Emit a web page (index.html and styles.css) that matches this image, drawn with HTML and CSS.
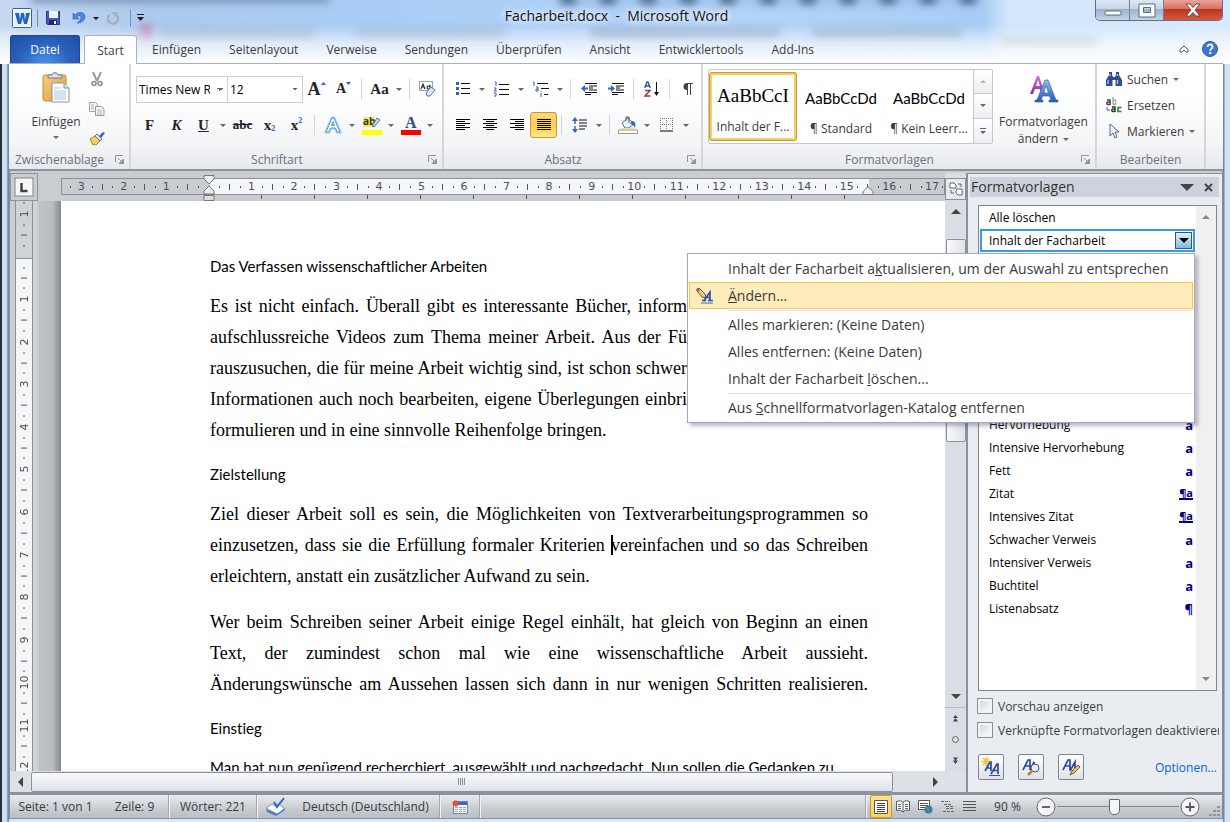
FILE: index.html
```html
<!DOCTYPE html>
<html lang="de">
<head>
<meta charset="utf-8">
<title>Facharbeit.docx - Microsoft Word</title>
<link rel="stylesheet" href="styles.css">
</head>
<body>
<svg class="defs" aria-hidden="true">
  <defs>
    <linearGradient id="gBlue" x1="0" y1="0" x2="0" y2="1"><stop offset="0" stop-color="#8fc0f5"/><stop offset="1" stop-color="#2358b0"/></linearGradient>
    <linearGradient id="gPurple" x1="0" y1="0" x2="0" y2="1"><stop offset="0" stop-color="#d070dc"/><stop offset="1" stop-color="#8d2f9f"/></linearGradient>
    <linearGradient id="gBoard" x1="0" y1="0" x2="1" y2="1"><stop offset="0" stop-color="#f6cf7e"/><stop offset="1" stop-color="#dc9f3a"/></linearGradient>
    <symbol id="launcher" viewBox="0 0 9 9"><path d="M.5 7V.5H8" fill="none" stroke="#8f949b"/><path d="M3 3l3 3M8.500 4v4.500H4z" fill="#8f949b" stroke="#8f949b"/></symbol>
  </defs>
</svg>
<div class="window">
  <header class="titlebar">
    <div class="glass" aria-hidden="true"><i class="g1"></i><i class="g2"></i><i class="g3"></i><i class="g4"></i><i class="g5"></i><i class="g6"></i><i class="g7"></i><i class="g8"></i></div>
    <div class="quick">
      <button class="q" aria-label="Word"><svg width="20" height="20" viewBox="0 0 20 20"><rect x=".5" y=".5" width="19" height="19" rx="1" fill="#fff" stroke="#2c62b2"/><rect x="2" y="2" width="16" height="16" fill="#e8f1fb"/><path d="M3 5h4l1 7 1-7h3l1 7 1-7h4l-3 11h-3l-1.500-6-1.500 6H6z" fill="#2463c0"/></svg></button>
      <span class="qsep"></span>
      <button class="q" aria-label="Speichern"><svg width="16" height="16" viewBox="0 0 16 16"><path d="M1 1h14v14H2.500L1 13.500z" fill="#4a55c4"/><path d="M1.500 1.500h13v13H3L1.500 13z" fill="none" stroke="#2f379b"/><rect x="4" y="1" width="9" height="7" fill="#eef3fc"/><rect x="4" y="10" width="8" height="5" fill="#262b55"/><rect x="9" y="11" width="2" height="3" fill="#fff"/></svg></button>
      <button class="q undo" aria-label="Rückgängig"><svg width="14" height="14" viewBox="0 0 14 14"><path d="M1 2v6h6L5 6c2-2 4-1.500 4 .5 0 2-2 4-4 5.500 5 0 8-3 8-6.500C13 1.500 7-.5 3 4z" fill="#4c86dd" stroke="#2a5cb4" stroke-width=".6"/></svg></button>
      <i class="caret dark"></i>
      <button class="q redo" aria-label="Wiederholen"><svg width="14" height="14" viewBox="0 0 14 14"><path d="M3.500 4A5 5 0 1 0 11 4.500" fill="none" stroke="#a9aeb8" stroke-width="2.600"/><path d="M5 1h6.500v6.500z" fill="#a9aeb8"/></svg></button>
      <span class="qsep"></span>
      <button class="q more" aria-label="Schnellzugriff anpassen"><svg width="8" height="8" viewBox="0 0 8 8"><path d="M0 .5h7" stroke="#222"/><path d="M0 3h7L3.500 7z" fill="#222"/></svg></button>
    </div>
    <h1 class="title">Facharbeit.docx&nbsp; -&nbsp; Microsoft Word</h1>
    <div class="winbtns">
      <button aria-label="Minimieren"><svg width="18" height="12" viewBox="0 0 18 12"><rect x="1" y="7" width="16" height="4" rx="1" fill="#fff" stroke="#5a6a7c"/></svg></button>
      <button aria-label="Maximieren"><svg width="18" height="15" viewBox="0 0 18 15"><path fill-rule="evenodd" d="M1 1h16v13H1zM5.500 4.500h7v5h-7z" fill="#fff" stroke="#5a6a7c"/></svg></button>
      <button class="close" aria-label="Schließen"><svg width="18" height="14" viewBox="0 0 18 14"><path d="M2 1h4l3 3.500L12 1h4l-5 6 5 6h-4L9 9.500 6 13H2l5-6z" fill="#fff" stroke="#6a4a50"/></svg></button>
    </div>
  </header>

  <nav class="tabs">
    <button class="tab file">Datei</button>
    <button class="tab active">Start</button>
    <button class="tab">Einfügen</button>
    <button class="tab">Seitenlayout</button>
    <button class="tab">Verweise</button>
    <button class="tab">Sendungen</button>
    <button class="tab">Überprüfen</button>
    <button class="tab">Ansicht</button>
    <button class="tab">Entwicklertools</button>
    <button class="tab">Add-Ins</button>
    <span class="grow"></span>
    <button class="mini" aria-label="Menüband minimieren"><svg width="10" height="8" viewBox="0 0 10 8"><path d="M1 4.500L5 1l4 3.500V7H7L5 5 3 7H1z" fill="#fff" stroke="#555"/></svg></button>
    <button class="mini help" aria-label="Hilfe"><svg width="16" height="16" viewBox="0 0 16 16"><circle cx="8" cy="8" r="7.500" fill="#3d76cf" stroke="#2a5aa8"/><path d="M5.500 6c0-3.400 5-3.400 5 0 0 1.700-2.300 1.700-2.300 3.700" fill="none" stroke="#fff" stroke-width="1.800"/><rect x="7.200" y="11" width="2" height="2" fill="#fff"/></svg></button>
  </nav>

  <section class="ribbon">
    <div class="group clipboard">
      <div class="body">
        <button class="big"><svg width="28" height="31" viewBox="0 0 28 31"><rect x="1" y="3" width="23" height="26" rx="2" fill="url(#gBoard)" stroke="#c08a3a"/><path d="M6 6V3h4c0-3 6-3 6 0h4v3z" fill="#dfe3e8" stroke="#6d7680"/><path d="M10 11h12l5 5v14H10z" fill="#fff" stroke="#7d93b4"/><path d="M22 11v5h5" fill="#dbe6f5" stroke="#7d93b4"/><path d="M12 16h7M12 19h12M12 21h12M12 23h12M12 25h12M12 27h12" stroke="#b3c3da"/></svg><span>Einfügen</span><i class="caret"></i></button>
        <div class="stack">
          <button aria-label="Ausschneiden"><svg width="12" height="15" viewBox="0 0 12 15"><path d="M2 0l4 9M10 0L6 9" stroke="#9a9a9a" stroke-width="2"/><circle cx="3" cy="11.500" r="2" fill="none" stroke="#8f8f8f" stroke-width="1.600"/><circle cx="9" cy="11.500" r="2" fill="none" stroke="#8f8f8f" stroke-width="1.600"/></svg></button>
          <button aria-label="Kopieren"><svg width="16" height="14" viewBox="0 0 16 14"><path d="M.5.500h6l2 2v7h-8z" fill="#f6f6f6" stroke="#a5a5a5"/><path d="M6.500 4.500h6l2.500 2.500v6.500H6.500z" fill="#f6f6f6" stroke="#999"/><path d="M2 3h3M2 5h3M2 7h3M8 8h5M8 10h5M8 12h5" stroke="#b5b5b5"/></svg></button>
          <button aria-label="Format übertragen"><svg width="16" height="15" viewBox="0 0 16 15"><path d="M1 8l5-3 5 5-4 4-2-1-1 1z" fill="#f0d060" stroke="#a98a28"/><path d="M6 5l2-2 5 5-2 2z" fill="#dfe4ec" stroke="#6a7686"/><path d="M10 5l4-4 2 1-4 5z" fill="#4b58b8"/></svg></button>
        </div>
      </div>
      <footer><span>Zwischenablage</span><button aria-label="Dialog Zwischenablage"><svg width="9" height="9"><use href="#launcher"/></svg></button></footer>
    </div>

    <div class="group font">
      <div class="body rows">
        <div class="row">
          <select class="combo name" aria-label="Schriftart"><option>Times New Roman</option></select><select class="combo size" aria-label="Schriftgrad"><option>12</option></select>
          <button class="tb glyph" aria-label="Schrift vergrößern"><span class="a-lg">A</span><svg width="5" height="16" viewBox="0 0 5 16"><path d="M0 4l2.500-3L5 4z" fill="#2a62b8"/></svg></button>
          <button class="tb glyph" aria-label="Schrift verkleinern"><span class="a-sm">A</span><svg width="5" height="16" viewBox="0 0 5 16"><path d="M0 1h5L2.500 4z" fill="#2a62b8"/></svg></button>
          <i class="sep"></i>
          <button class="tb serif-b" aria-label="Groß-/Kleinschreibung">Aa</button><i class="caret c"></i>
          <i class="sep"></i>
          <button class="tb" aria-label="Formatierung löschen"><svg width="17" height="16" viewBox="0 0 17 16"><rect x=".5" y=".5" width="13" height="9" fill="#fff" stroke="#8fa5c5"/><path d="M2 8l2-5 2 5M3 6h2M11 4v4M11 6a1.500 1.500 0 1 0 0 1" fill="none" stroke="#333" stroke-width="1.200"/><path d="M7 12l5-6 4 3-5 6H8z" fill="#dce5f3" stroke="#5a78a8"/></svg></button>
        </div>
        <div class="row">
          <button class="tb serif-b">F</button><button class="tb serif-b it">K</button><button class="tb serif-b ul">U</button><i class="caret c"></i>
          <button class="tb strike">abc</button><button class="tb xs">x<sub>2</sub></button><button class="tb xs">x<sup>2</sup></button>
          <i class="sep"></i>
          <button class="tb" aria-label="Texteffekte"><svg width="18" height="18" viewBox="0 0 18 18"><path d="M2 16L8 2h2l6 14h-3l-1.500-4h-5L5 16zM7.500 9.500h3L9 5.500z" fill="#fff" stroke="#a6d3f0" stroke-width="3"/><path d="M2 16L8 2h2l6 14h-3l-1.500-4h-5L5 16zM7.500 9.500h3L9 5.500z" fill="#fff" stroke="#4d9bd6"/></svg></button><i class="caret c"></i>
          <button class="tb" aria-label="Texthervorhebungsfarbe"><svg width="20" height="20" viewBox="0 0 20 20"><rect x="1" y="2" width="12" height="10" fill="#f5ee5a"/><text x="1" y="10" font-size="10" font-weight="bold" fill="#333">ab</text><path d="M10 11l5-8 3 2-6 7z" fill="#c9d9f0" stroke="#4c6ea5"/><rect y="15" width="20" height="5" fill="#ff0"/></svg></button><i class="caret c"></i>
          <button class="tb" aria-label="Schriftfarbe"><svg width="20" height="20" viewBox="0 0 20 20"><text x="4" y="13" class="serif" font-size="16" fill="#2b4a83">A</text><rect y="15" width="20" height="5" fill="#f00"/></svg></button><i class="caret c"></i>
        </div>
      </div>
      <footer><span>Schriftart</span><button aria-label="Dialog Schriftart"><svg width="9" height="9"><use href="#launcher"/></svg></button></footer>
    </div>

    <div class="group para">
      <div class="body rows">
        <div class="row">
          <button class="tb" aria-label="Aufzählungszeichen"><svg width="14" height="14" viewBox="0 0 14 14"><path d="M1.500 0v3M1.500 5v3M1.500 10v3" stroke="#3b5fae" stroke-width="3"/><path d="M5 1.500h9M5 6.500h9M5 11.500h9" stroke="#111"/></svg></button><i class="caret c"></i>
          <button class="tb" aria-label="Nummerierung"><svg width="15" height="15" viewBox="0 0 15 15"><path d="M1 0h1v4M0 6h2v1L0 9h3M0 11h2v3H0" fill="none" stroke="#3b5fae"/><path d="M5 2.500h10M5 7.500h10M5 12.500h10" stroke="#111"/></svg></button><i class="caret c"></i>
          <button class="tb" aria-label="Liste mit mehreren Ebenen"><svg width="17" height="15" viewBox="0 0 17 15"><path d="M1 0h1v4M4 5h2v4H4V7h2M9 9v1M9 11v4" fill="none" stroke="#3b5fae"/><path d="M5 1.500h11M9 6.500h8M12 12.500h4" stroke="#111"/></svg></button><i class="caret c"></i>
          <i class="sep"></i>
          <button class="tb" aria-label="Einzug verkleinern"><svg width="16" height="14" viewBox="0 0 16 14"><path d="M4 1.500h12M8 4h8M8 6h4M8 8h8M4 10.500h12M4 12.500h6" stroke="#111" stroke-width="1.200"/><path d="M0 6.500L4 3v2.500h3v2H4V10z" fill="#2f66c2"/></svg></button>
          <button class="tb" aria-label="Einzug vergrößern"><svg width="16" height="14" viewBox="0 0 16 14"><path d="M4 1.500h12M8 4h8M8 6h4M8 8h8M4 10.500h12M4 12.500h6" stroke="#111" stroke-width="1.200"/><path d="M7 6.500L3 3v2.500H0v2h3V10z" fill="#2f66c2"/></svg></button>
          <i class="sep"></i>
          <button class="tb" aria-label="Sortieren"><svg width="16" height="16" viewBox="0 0 16 16"><path d="M.7 7L3 1h1l2.300 6M1.500 5h4" fill="none" stroke="#2f55a6" stroke-width="1.400"/><path d="M1 9.500h5L1 15h5.500" fill="none" stroke="#a03030" stroke-width="1.400"/><path d="M12.500 1v12" stroke="#111"/><path d="M10 11h5l-2.500 4z" fill="#111"/></svg></button>
          <i class="sep"></i>
          <button class="tb" aria-label="Alle anzeigen"><svg width="11" height="13" viewBox="0 0 11 13"><path d="M5 0a3.500 3.500 0 0 0 0 7z" fill="#444"/><path d="M5.500 0v12M8.500 0v12M4 .5h7" stroke="#444"/></svg></button>
        </div>
        <div class="row">
          <button class="tb" aria-label="Linksbündig"><svg width="14" height="12" viewBox="0 0 14 12"><path d="M0 .5h14M0 2.500h9M0 4.500h14M0 6.500h9M0 8.500h14M0 10.500h9" stroke="#000"/></svg></button><button class="tb" aria-label="Zentriert"><svg width="14" height="12" viewBox="0 0 14 12"><path d="M0 .5h14M3 2.500h8M0 4.500h14M3 6.500h8M0 8.500h14M3 10.500h8" stroke="#000"/></svg></button><button class="tb" aria-label="Rechtsbündig"><svg width="14" height="12" viewBox="0 0 14 12"><path d="M0 .5h14M5 2.500h9M0 4.500h14M5 6.500h9M0 8.500h14M5 10.500h9" stroke="#000"/></svg></button><button class="tb on" aria-label="Blocksatz" aria-pressed="true"><svg width="14" height="12" viewBox="0 0 14 12"><path d="M0 .5h14M0 2.500h14M0 4.500h14M0 6.500h14M0 8.500h14M0 10.500h14" stroke="#000"/></svg></button>
          <i class="sep"></i>
          <button class="tb" aria-label="Zeilenabstand"><svg width="15" height="16" viewBox="0 0 15 16"><path d="M3 3v4M3 9v4" stroke="#2f66c2" stroke-width="1.500"/><path d="M0 4h6L3 0zM0 12h6l-3 4z" fill="#2f66c2"/><path d="M7 3h8M7 6h8M7 9h8M7 12h6" stroke="#111" stroke-width="1.200"/></svg></button><i class="caret c"></i>
          <i class="sep"></i>
          <button class="tb" aria-label="Schattierung"><svg width="20" height="18" viewBox="0 0 20 18"><path d="M4 7l6-5 6 6-5 4H7z" fill="#eef3fb" stroke="#4a6ea8"/><path d="M8 5V1h3v6" fill="none" stroke="#555"/><path d="M14 5c3 0 4 3 3 7-1-3-3-4-5-4z" fill="#2f66c2"/><path d="M3 12.500h14" stroke="#f4ea50"/><rect x=".5" y="14" width="19" height="3.500" fill="#fff" stroke="#999"/></svg></button><i class="caret c"></i>
          <button class="tb" aria-label="Rahmen"><svg width="14" height="14" viewBox="0 0 14 14"><path d="M.5 0v12M6.500 0v12M12.500 0v12M0 .5h13M0 6.500h13" stroke="#777" stroke-dasharray="1 1"/><path d="M0 13h13" stroke="#000"/></svg></button><i class="caret c"></i>
        </div>
      </div>
      <footer><span>Absatz</span><button aria-label="Dialog Absatz"><svg width="9" height="9"><use href="#launcher"/></svg></button></footer>
    </div>

    <div class="group styles">
      <div class="body">
        <div class="gallery">
          <button class="style sel"><b class="times">AaBbCcI</b><span>Inhalt der F...</span></button>
          <button class="style"><b>AaBbCcDd</b><span>¶ Standard</span></button>
          <button class="style"><b>AaBbCcDd</b><span>¶ Kein Leerr...</span></button>
          <div class="gscroll"><button class="off" aria-label="Nach oben"><i class="caret up"></i></button><button aria-label="Nach unten"><i class="caret"></i></button><button aria-label="Weitere"><i class="bar"></i><i class="caret"></i></button></div>
        </div>
        <button class="big change"><svg width="30" height="28" viewBox="0 0 30 28"><path d="M1 19L8 1h2l6 18h-4l-1-5H6l-2 5zM7 11h4L9 5z" fill="url(#gPurple)"/><path d="M6 27v-2h2L16 5h3l8 20h2v2h-9v-2h2l-1.500-4h-7L12 25h2v2zM14.500 18h5L17 10.500z" fill="url(#gBlue)" stroke="#3565b4" stroke-width=".7"/></svg><span>Formatvorlagen<br>ändern <i class="caret inl"></i></span></button>
      </div>
      <footer><span>Formatvorlagen</span><button aria-label="Dialog Formatvorlagen"><svg width="9" height="9"><use href="#launcher"/></svg></button></footer>
    </div>

    <div class="group edit">
      <div class="body">
        <button><svg width="16" height="14" viewBox="0 0 16 14"><path d="M3 0h3v3l1 2h2l1-2V0h3v3l3 5v6H9.500V8h-3v6H0V8l3-5z" fill="#2c4f94"/><path d="M2 8v4M11.500 8v4M4 2v2M11.500 2v2" stroke="#a9c4ef" stroke-width="1.300"/></svg>Suchen<i class="caret"></i></button>
        <button><svg width="16" height="16" viewBox="0 0 16 16"><path d="M1 3h3v5M4 5H2a1 1 0 0 0 0 2.500h2" fill="none" stroke="#444" stroke-width="1.500"/><path d="M7 0v7.500M7 3h2.500v4.500H7" fill="none" stroke="#aaa" stroke-width="1.500"/><path d="M6 10h3v5M9 12H7a1 1 0 0 0 0 2.500h2" fill="none" stroke="#333" stroke-width="1.500"/><path d="M15.500 10.500h-3.500v4h3.500" fill="none" stroke="#1d8a2c" stroke-width="1.600"/><path d="M1 10v3h3" fill="none" stroke="#3a66b0"/></svg>Ersetzen</button>
        <button><svg width="16" height="16" viewBox="0 0 16 16"><path d="M4 1v12l3-3 2 5 2-1-2-5h4z" fill="#fff" stroke="#4a6494"/></svg>Markieren<i class="caret"></i></button>
      </div>
      <footer><span>Bearbeiten</span></footer>
    </div>
    <div class="rest"></div>
  </section>

  <main class="workspace">
    <div class="vside">
      <button class="tabstop" aria-label="Tabstopp"><svg width="20" height="20" viewBox="0 0 20 20"><rect x="1" y="1" width="18" height="18" fill="#f7f7f7" stroke="#7f858d"/><path d="M7.500 6v8h6" fill="none" stroke="#444" stroke-width="2.500"/></svg></button>
      <div class="vbody"><div class="vruler"><div class="vcells"><i>1</i><i></i><i>1</i><i>2</i><i>3</i><i>4</i><i>5</i><i>6</i><i>7</i><i>8</i><i>9</i><i>10</i><i>11</i><i>12</i></div></div><div class="edge"></div></div>
    </div>
    <div class="docarea">
      <div class="hruler">
        <div class="hscale"><div class="hcells"><i>3</i><i>2</i><i>1</i><i></i><i>1</i><i>2</i><i>3</i><i>4</i><i>5</i><i>6</i><i>7</i><i>8</i><i>9</i><i>10</i><i>11</i><i>12</i><i>13</i><i>14</i><i>15</i><i>16</i><i>17</i></div></div>
        <div class="stops"></div>
        <svg class="mark left" width="12" height="26" viewBox="0 0 12 26"><path d="M1 .5h10V4L6 9 1 4z" fill="#eee" stroke="#777"/><path d="M6 11l5 5v3H1v-3z" fill="#eee" stroke="#777"/><path d="M1 20.500h10v5H1z" fill="#ddd" stroke="#777"/></svg>
        <svg class="mark right" width="12" height="9" viewBox="0 0 12 9"><path d="M6 .7l5 5v2.800H1V5.700z" fill="#eee" stroke="#777"/></svg>
      </div>
      <article class="page">
        <h2>Das Verfassen wissenschaftlicher Arbeiten</h2>
        <p><span class="cut">Es ist nicht einfach. Überall gibt es interessante Bücher, inform</span><span class="cut">aufschlussreiche Videos zum Thema meiner Arbeit. Aus der Fü</span><span class="cut">rauszusuchen, die für meine Arbeit wichtig sind, ist schon schwer</span><span class="cut">Informationen auch noch bearbeiten, eigene Überlegungen einbri</span><span class="last">formulieren und in eine sinnvolle Reihenfolge bringen.</span></p>
        <h2>Zielstellung</h2>
        <p><span>Ziel dieser Arbeit soll es sein, die Möglichkeiten von Textverarbeitungsprogrammen so</span><span>einzusetzen, dass sie die Erfüllung formaler Kriterien <i class="cursor"></i>vereinfachen und so das Schreiben</span><span class="last">erleichtern, anstatt ein zusätzlicher Aufwand zu sein.</span></p>
        <p><span>Wer beim Schreiben seiner Arbeit einige Regel einhält, hat gleich von Beginn an einen</span><span>Text, der zumindest schon mal wie eine wissenschaftliche Arbeit aussieht.</span><span>Änderungswünsche am Aussehen lassen sich dann in nur wenigen Schritten realisieren.</span></p>
        <h2>Einstieg</h2>
        <h2 class="run">Man hat nun genügend recherchiert, ausgewählt und nachgedacht. Nun sollen die Gedanken zu</h2>
      </article>
    </div>
    <div class="vscroll">
      <button class="rulerbtn" aria-label="Lineal"><svg width="14" height="14" viewBox="0 0 14 14"><path d="M1 1h4l2 2v3H1zM8 7h5v6H9L7 11V8z" fill="#fff" stroke="#666"/><path d="M9 2h3v3M2 8v3h3" fill="none" stroke="#666"/></svg></button>
      <div class="vtrack"><i class="arr up"></i><i class="thumb"></i><i class="arr down"></i></div>
      <div class="browse">
        <button aria-label="Vorherige Seite"><svg width="7" height="7" viewBox="0 0 7 7"><path d="M1 3l2.500-3L6 3zM1 6.500L3.500 3 6 6.500z" fill="#444"/></svg></button><button aria-label="Browseobjekt"><svg width="9" height="9" viewBox="0 0 9 9"><circle cx="4.500" cy="4.500" r="3" fill="#ddd" stroke="#666"/></svg></button><button aria-label="Nächste Seite"><svg width="7" height="7" viewBox="0 0 7 7"><path d="M1 .5h5L3.500 4zM1 3.500h5L3.500 7z" fill="#444"/></svg></button>
      </div>
    </div>
    <div class="hscroll"><i class="arr lt"></i><div class="htrack"><i class="hthumb"></i></div><i class="arr rt"></i></div>

    <aside class="pane">
      <header><h3>Formatvorlagen</h3><i class="arr down"></i><button aria-label="Bereich schließen"><svg width="9" height="9" viewBox="0 0 9 9"><path d="M1 1l7 7M8 1L1 8" stroke="#444" stroke-width="2"/></svg></button></header>
      <div class="listbox">
        <div class="items">
          <ul><li>Alle löschen</li><li class="cur">Inhalt der Facharbeit<button aria-label="Menü öffnen"><i class="caret big-c"></i></button></li></ul>
          <ul class="more-styles"><li>Hervorhebung<b>a</b></li><li>Intensive Hervorhebung<b>a</b></li><li>Fett<b>a</b></li><li>Zitat<b class="u">¶a</b></li><li>Intensives Zitat<b class="u">¶a</b></li><li>Schwacher Verweis<b>a</b></li><li>Intensiver Verweis<b>a</b></li><li>Buchtitel<b>a</b></li><li>Listenabsatz<b>¶</b></li></ul>
        </div>
        <div class="lscroll"><i class="arr up"></i><i class="arr down"></i></div>
      </div>
      <label class="check"><input type="checkbox">Vorschau anzeigen</label>
      <label class="check"><input type="checkbox">Verknüpfte Formatvorlagen deaktivieren</label>
      <div class="actions">
        <button aria-label="Neue Formatvorlage"><svg width="20" height="20" viewBox="0 0 20 20"><path d="M5 0v9M0 4.500h10M2 1l6 7M8 1L2 8" stroke="#f0c93a" stroke-width="1.500"/><path d="M4 14L9 5h1v9M6 11h4M10 17l6-10h1v10M12 13.500h5" fill="none" stroke="#2d49a5" stroke-width="1.700"/><path d="M8 18.500h11" stroke="#5a3fb5"/></svg></button>
        <button aria-label="Formatinspektor"><svg width="20" height="20" viewBox="0 0 20 20"><path d="M2 13L7 3h2v10M4 9h5M9 13l4-8v6" fill="none" stroke="#2d49a5" stroke-width="1.700"/><circle cx="14" cy="11" r="4" fill="#e4eefb" stroke="#555"/><path d="M11 14l-4 4" stroke="#c47a2c" stroke-width="2.500"/></svg></button>
        <button aria-label="Formatvorlagen verwalten"><svg width="20" height="20" viewBox="0 0 20 20"><path d="M2 13L7 3h2v10M4 9h5M9 14l5-9v8" fill="none" stroke="#2d49a5" stroke-width="1.700"/><path d="M9 18l2-4 6-6 2 2-6 6z" fill="#f1c060" stroke="#7b5a28"/></svg></button>
        <a href="#optionen">Optionen...</a>
      </div>
    </aside>

    <div class="menu" role="menu">
      <button role="menuitem">Inhalt der Facharbeit a<u>k</u>tualisieren, um der Auswahl zu entsprechen</button>
      <button role="menuitem" class="hot"><svg width="18" height="16" viewBox="0 0 18 16"><path d="M1 1l2-1 6 6 1 4-4-1-5-6z" fill="#e9cf7c" stroke="#6e5a3c"/><path d="M0 2l2-2 2 2-2 2z" fill="#c0504d"/><path d="M8 12.500L14 4v8.500M10.500 9.500h4M12 12.500h5M6 12.500h4" fill="none" stroke="#2d49a5" stroke-width="1.600"/><path d="M5 15h12" stroke="#2d6ad0"/></svg><u>Ä</u>ndern...</button>
      <hr>
      <button role="menuitem">Alles markieren: (Keine Daten)</button>
      <button role="menuitem">Alles entfernen: (Keine Daten)</button>
      <button role="menuitem">Inhalt der Facharbeit <u>l</u>öschen...</button>
      <hr>
      <button role="menuitem">Aus <u>S</u>chnellformatvorlagen-Katalog entfernen</button>
    </div>
  </main>

  <footer class="status">
    <button class="pg">Seite: 1 von 1</button><button class="ln">Zeile: 9</button><i class="ssep"></i>
    <button class="wd">Wörter: 221</button><i class="ssep"></i>
    <button class="sp" aria-label="Rechtschreibung"><svg width="21" height="20" viewBox="0 0 21 20"><path d="M1 11l6-4 3 2 4-2 6 5-8 5z" fill="#fff" stroke="#8593ad"/><path d="M1 12l1 3 9 4 9-6v-2l-8 6z" fill="#4b7dcc"/><path d="M9 5l3 5 7-9" fill="none" stroke="#2f66c2" stroke-width="2"/></svg></button>
    <button class="lang">Deutsch (Deutschland)</button><i class="ssep"></i>
    <button class="mc" aria-label="Makro"><svg width="16" height="14" viewBox="0 0 16 14"><rect x="1.500" y="1.500" width="14" height="12" fill="#fff" stroke="#6b86b4"/><path d="M2 3.500h13" stroke="#3868c8" stroke-width="3"/><path d="M3 7.500h11M3 9.500h11M3 11.500h11" stroke="#8fa3c8" stroke-dasharray="3 1"/><circle cx="3.500" cy="3.500" r="3" fill="#e2533a"/></svg></button><i class="ssep"></i>
    <span class="grow"></span><i class="ssep"></i>
    <button class="view on" aria-label="Seitenlayout"><svg width="14" height="14" viewBox="0 0 14 14"><path d="M.5.500h13v13H.5z" fill="#fff" stroke="#555"/><path d="M3 3.500h8M3 5.500h8M3 7.500h8M3 9.500h8M3 11.500h8" stroke="#444"/></svg></button>
    <button class="view" aria-label="Vollbild-Lesemodus"><svg width="14" height="13" viewBox="0 0 14 13"><path d="M.5 1.500c3-1 5-1 6.500 1 1.500-2 4-2 6.500-1v9c-3-1-5 0-6.500 1.500C5.500 10.500 3 9.500.5 10.500zM7 2.500V12" fill="#fff" stroke="#555"/><path d="M2 4.500h3M2 6.500h3M2 8.500h3M9 4.500h3M9 6.500h3M9 8.500h3" stroke="#666"/></svg></button>
    <button class="view" aria-label="Weblayout"><svg width="15" height="14" viewBox="0 0 15 14"><path d="M.5.500h11v9H.5z" fill="#fff" stroke="#555"/><path d="M2 3.500h8M2 5.500h8M2 7.500h5" stroke="#555"/><circle cx="10.500" cy="9.500" r="4" fill="#3c79b0"/><path d="M8 8c2 0 3 1 2 3" stroke="#4fa655" stroke-width="2" fill="none"/></svg></button>
    <button class="view" aria-label="Gliederung"><svg width="13" height="12" viewBox="0 0 13 12"><path d="M0 .5h9M3 3.500h8M5 5.500h7M5 7.500h7M2 10.500h11" stroke="#666" stroke-dasharray="3 1"/></svg></button>
    <button class="view" aria-label="Entwurf"><svg width="13" height="12" viewBox="0 0 13 12"><path d="M0 .5h13M0 3.500h13M0 6.500h13M0 9.500h13" stroke="#555"/></svg></button>
    <button class="zoom">90 %</button>
    <button class="round" aria-label="Verkleinern"><svg width="20" height="20" viewBox="0 0 20 20"><circle cx="10" cy="10" r="9" fill="#f4f5f6" stroke="#666"/><path d="M6 10h8" stroke="#555" stroke-width="1.800"/></svg></button>
    <input class="slider" type="range" min="0" max="100" value="47" aria-label="Zoom">
    <button class="round" aria-label="Vergrößern"><svg width="20" height="20" viewBox="0 0 20 20"><circle cx="10" cy="10" r="9" fill="#f4f5f6" stroke="#666"/><path d="M5.500 10h9M10 5.500v9" stroke="#555" stroke-width="1.800"/></svg></button>
    <svg class="grip" width="12" height="12" viewBox="0 0 12 12"><path d="M9 1h3v2H9zM9 5h3v2H9zM9 9h3v2H9zM5 5h3v2H5zM5 9h3v2H5zM1 9h3v2H1z" fill="#8f969e"/></svg>
  </footer>
</div>
</body>
</html>
```
FILE: styles.css
```css
* { box-sizing: border-box; }
body { margin: 0; font-family: "Open Sans", "Noto Sans", sans-serif; font-size: 12px; color: #3b3b3b; }
button { border: 0; background: none; padding: 0; margin: 0; font: inherit; color: inherit; display: flex; align-items: center; justify-content: center; }
h1, h2, h3, p, ul { margin: 0; padding: 0; font-weight: normal; }
ul { list-style: none; }
i, b { font-style: normal; display: inline-block; }
svg { overflow: visible; }
.defs { position: absolute; width: 0; height: 0; }
.grow { flex: 1; }

.window { position: relative; height: 100vh; display: grid; grid-template-rows: 35px 29px 107px 1fr 27px; padding: 0 7px 3px 9px; overflow: hidden;
  background: linear-gradient(90deg, #2b3036 0 2px, #cfe3f7 2px 6px, #9fc4ea 7px, #78869a 8px 9px, transparent 9px calc(100% - 7px), #78869a calc(100% - 7px) calc(100% - 6px), #cfe3fa calc(100% - 5px)), linear-gradient(#b9d5f1, #d4e8fd); }

/* title bar */
.titlebar { position: relative; display: grid; grid-template-columns: 1fr auto 1fr; align-items: start; margin: 0 -7px 0 -9px; padding: 0 7px 0 10px; background: linear-gradient(#a3c6ee, #b7d4f3 60%, #c4dcf5); }
.glass { position: absolute; inset: 0 0 -29px 0; overflow: hidden; background: linear-gradient(90deg, #c6d9f0 0, #adcaee 12%, #a9cdf5 30%, #b4d3f6 60%, #a8cdf6 80%, #d3e6fa 82%, #d5e8fc); }
.glass::after { content: ""; position: absolute; inset: 25px 0 0; background: linear-gradient(rgba(255,255,255,0), rgba(255,255,255,.6) 45%, #fff); }
.glass i { position: absolute; filter: blur(4px); }
.g1 { left: 30px; top: -6px; width: 300px; height: 9px; background: #7c96b8; }
.g2 { left: 160px; top: 30px; width: 155px; height: 9px; background: #92aed0; }
.g3 { left: 355px; top: 30px; width: 150px; height: 9px; background: #92aed0; }
.g4 { left: 590px; top: 29px; width: 190px; height: 10px; background: #8ba7c8; }
.g5 { left: 812px; top: 30px; width: 150px; height: 9px; background: #8ba7c8; }
.g6 { left: 560px; top: -6px; width: 420px; height: 10px; background: repeating-linear-gradient(90deg, #3f5f87 0 16px, #9cc0ea 16px 40px); }
.g7 { left: 1000px; top: 38px; width: 98px; height: 9px; background: #a3b7cd; }
.g8 { left: 140px; top: 25px; width: 12px; height: 14px; background: #c07fb0; }
.quick { position: relative; display: flex; align-items: center; height: 36px; }
.q { width: 24px; height: 24px; }
.qsep { width: 1px; height: 18px; margin: 0 3px; background: #7690b4; }
.q.undo, .q.redo { width: 28px; }
.q.more { width: 14px; }
.title { position: relative; font-size: 14px; color: #111; white-space: pre; text-shadow: 0 0 6px #fff, 0 0 10px #fff; line-height: 32px; }
.winbtns { position: relative; display: flex; justify-self: end; height: 21px; border: 1px solid #5f7186; border-top: 0; border-radius: 0 0 5px 5px; overflow: hidden; }
.winbtns button { width: 34px; background: linear-gradient(#dde8f3, #c5d4e4 45%, #9eb3ca 46%, #c0d2e5); border-right: 1px solid #6d8095; }
.winbtns .close { width: 58px; border: 0; background: linear-gradient(#e8a598, #d8705c 45%, #bf3320 46%, #d6583c); }

/* tabs */
.tabs { position: relative; display: flex; align-items: stretch; padding-left: 1px; border-bottom: 1px solid #a9b1bb; }
.tab { padding: 0 14px; }
.tab.file { width: 70px; margin-right: 4px; color: #fff; border-radius: 3px 3px 0 0; background: radial-gradient(ellipse at 50% 110%, #4a97ec, #2a62bb 55%, #1f4ea5); border: 1px solid #1b4793; border-bottom: 0; }
.tab.active { width: 53px; padding: 0; margin-bottom: -1px; margin-right: 1px; background: #fff; border: 1px solid #a9b1bb; border-bottom: 0; border-radius: 3px 3px 0 0; }
.mini { width: 26px; }

/* ribbon */
.ribbon { position: relative; display: flex; background: linear-gradient(#fff, #fff 30%, #f4f5f7 75%, #e6e9ed); border-bottom: 2px solid #8e949d; }
.group { display: flex; flex-direction: column; border-right: 2px solid #d3d6da; }
.group .body { flex: 1; display: flex; }
.group footer { height: 19px; display: flex; align-items: center; justify-content: center; color: #6b717c; }
.group footer span { flex: 1; text-align: center; }
.group footer button { width: 19px; height: 18px; }
.clipboard { width: 122px; }
.font { width: 313px; }
.para { width: 259px; }
.styles { width: 394px; }
.edit { width: 109px; }
.rest { flex: 1; }
.caret { width: 0; height: 0; border: 3px solid transparent; border-top-color: #666; border-bottom: 0; }
.caret.dark { border-top-color: #111; }
.caret.up { border: 3px solid transparent; border-bottom-color: #b5b5b5; border-top: 0; }
.caret.c { margin: 0 3px; }
.caret.inl { vertical-align: middle; margin-left: 2px; }
.big { flex-direction: column; justify-content: flex-start; line-height: 17px; }
.clipboard .big { width: 94px; padding-top: 8px; gap: 10px; }
.clipboard .big span { margin-bottom: -4px; }
.stack { display: flex; flex-direction: column; justify-content: space-between; padding: 8px 0 4px; align-items: center; width: 18px; margin-left: -15px; }
.rows { flex-direction: column; padding: 12px 0 0 5px; gap: 10px; }
.row { display: flex; align-items: center; height: 26px; }
.tb { width: 27px; height: 26px; flex: none; }
.tb.on { border: 1px solid #c29b36; border-radius: 3px; background: linear-gradient(#fbd87c, #ffc94f 50%, #ffe98c); }
.sep { width: 1px; height: 20px; margin: 0 4px; background: #d2d5d9; }
.combo { appearance: none; height: 27px; border: 1px solid #ccced1; border-radius: 0; background: #fff no-repeat; background-image: linear-gradient(to bottom left, #666 50%, transparent 50%), linear-gradient(to bottom right, #666 50%, transparent 50%); background-size: 3px 3px; background-position: right 7px center, right 4px center; color: #000; font: 12px "Open Sans", sans-serif; padding: 0 17px 0 2px; }
.combo.name { width: 92px; }
.combo.size { width: 76px; margin-left: -1px; }
.glyph { font-family: "Liberation Serif", serif; font-weight: bold; color: #222; }
.a-lg { font-size: 18px; line-height: 20px; }
.a-sm { font-size: 14px; line-height: 20px; }
.serif { font-family: "Liberation Serif", serif; font-weight: bold; }
.serif-b, .strike, .xs { font-family: "Liberation Serif", serif; font-weight: bold; font-size: 15px; color: #222; }
.it { font-style: italic; }
.ul { text-decoration: underline; }
.strike { font-size: 13px; text-decoration: line-through; }
.xs sub, .xs sup { font-size: 8px; color: #2a62b8; line-height: 8px; }
.xs sub { align-self: flex-end; margin-bottom: 5px; }
.xs sup { align-self: flex-start; margin-top: 5px; }
.gallery { display: flex; height: 75px; margin: 5px 0 0 5px; width: 285px; border: 1px solid #c5c8cd; background: #fff; border-radius: 2px; }
.style { flex-direction: column; width: 88px; padding: 9px 0 0; gap: 9px; }
.style b { font: 15px "Lato", sans-serif; height: 26px; line-height: 26px; color: #000; }
.style b.times { font: 19px "Liberation Serif", serif; line-height: 26px; }
.style span { line-height: 17px; white-space: nowrap; }
.style.sel { height: 69px; margin-top: 2px; border: 3px solid #f8cf5c; outline: 1px solid #c99a3a; outline-offset: -1px; border-radius: 3px; padding: 4px 0 0; }
.gscroll { flex: 1; display: grid; grid-template-rows: repeat(3, 1fr); }
.gscroll button { flex-direction: column; gap: 2px; border: 1px solid #c5c8cd; border-width: 0 0 1px 1px; background: linear-gradient(#fff, #eceef1); }
.gscroll button:last-child { border-bottom: 0; }
.bar { width: 6px; height: 1px; background: #666; }
.change { width: 101px; padding-top: 11px; gap: 10px; }
.edit .body { flex-direction: column; padding: 2px 0 0 9px; }
.edit .body button { height: 26px; gap: 5px; justify-content: flex-start; }

/* workspace */
.workspace { position: relative; min-height: 0; display: grid; grid-template-columns: 51px 1fr 21px 256px; grid-template-rows: 1fr 21px; background: #c9cdd2; border: solid #8b9098; border-width: 0 1px; padding-top: 2px; }
.vside, .docarea { display: grid; grid-template-rows: 28px 1fr; grid-template-columns: minmax(0, 1fr); min-height: 0; min-width: 0; }
.tabstop { width: 28px; border: 1px solid #8e949d; }
.vbody { display: flex; min-height: 0; overflow: hidden; }
.vruler { width: 18px; margin-left: 5px; border: 1px solid #8a919b; border-width: 0 1px; overflow: hidden; background: linear-gradient(#cfd3d8 57px, #8a919b 57px 58px, #f5f6f7 58px); }
.vcells { display: flex; flex-direction: column; height: 596px; margin-top: -8px; }
.vcells i, .hcells i { flex: 1; display: flex; align-items: center; justify-content: center; font: 11px "DejaVu Sans", sans-serif; color: #4a4f58; }
.vcells i { writing-mode: vertical-rl; transform: rotate(180deg); background: linear-gradient(#555, #555) center 24% / 2px 1px, linear-gradient(#555, #555) center 76% / 2px 1px, linear-gradient(#555, #555) center top / 6px 1px; background-repeat: no-repeat; }
.edge { flex: 1; background: linear-gradient(90deg, #cfd3d8 0 5px, #bfc3c8 20%, #b9bdc2 70%, #84888e); }
.hruler { position: relative; padding-top: 5px; }
.hscale { height: 17px; overflow: hidden; border: 1px solid #8a919b; background: linear-gradient(90deg, #c9cdd2 148px, #f5f6f7 148px 807px, #c9cdd2 807px); }
.hcells { display: flex; width: 893px; margin-left: -2px; height: 15px; }
.hcells i { background: linear-gradient(#555, #555) 24% center / 1px 2px, linear-gradient(#555, #555) 76% center / 1px 2px, linear-gradient(#555, #555) right center / 1px 6px; background-repeat: no-repeat; }
.stops { height: 4px; margin-left: 148px; width: 640px; background: repeating-linear-gradient(90deg, transparent 0 52px, #555 52px 53px) no-repeat; }
.mark { position: absolute; }
.mark.left { left: 142px; top: 2px; }
.mark.right { left: 801px; top: 13px; }
.page { background: #fff; min-height: 0; overflow: hidden; padding: 50px 0 0 149px; color: #000; }
.page h2 { font: 15px "Lato", sans-serif; font-variant-ligatures: none; line-height: 31px; height: 31px; margin-bottom: 9px; white-space: nowrap; }
.page h2 + h2 { margin-top: -1px; }
.page p { width: 658px; font: 18px "Liberation Serif", serif; line-height: 31px; margin-bottom: 13px; }
.page p + p { margin-top: 15px; }
.page p span { display: block; height: 31px; white-space: nowrap; text-align: justify; text-align-last: justify; }
.page p .cut { width: 477px; }
.page p .last { text-align-last: left; }
.cursor { width: 2px; height: 20px; margin-right: -2px; vertical-align: -4px; background: #000; }
.vscroll { background: #d9dee5; display: flex; flex-direction: column; min-width: 0; }
.rulerbtn { height: 22px; margin-top: 5px; border: 1px solid #8a919b; background: #e6e9ed; }
.vtrack { flex: 1; display: flex; flex-direction: column; align-items: center; padding: 9px 0 8px; }
.arr { border: 5px solid transparent; width: 0; height: 0; }
.arr.up { border-bottom-color: #444; border-top: 0; }
.arr.down { border-top-color: #444; border-bottom: 0; }
.arr.lt { border-right-color: #444; border-left: 0; }
.arr.rt { border-left-color: #444; border-right: 0; }
.thumb { width: 20px; height: 203px; margin: 25px 0 auto; border: 1px solid #8a919b; border-radius: 2px; background: linear-gradient(90deg, #f8f9fb, #dfe3e9); }
.browse { display: flex; flex-direction: column; align-items: center; height: 64px; justify-content: space-around; border-top: 1px solid #b8bdc5; }
.hscroll { grid-area: 2 / 1 / 3 / 4; display: flex; align-items: center; background: #dde1e7; padding: 0 28px 0 8px; }
.htrack { flex: 1; height: 20px; margin: 0 40px 0 8px; }
.hthumb { display: block; height: 20px; border: 1px solid #8a919b; border-radius: 2px; background: repeating-linear-gradient(90deg, #8a919b 0 1px, transparent 1px 2px) center / 8px 7px no-repeat, linear-gradient(#f8f9fb, #dfe3e9); }

/* styles pane */
.pane { grid-area: 1 / 4 / 3 / 5; border-left: 2px solid #8a919b; border-top: 1px solid #8a919b; background: #e9edf2; padding: 3px 3px 12px 2px; display: flex; flex-direction: column; min-width: 0; overflow: hidden; }
.pane header { display: flex; align-items: center; height: 20px; background: #ccd3dc; padding: 0 5px 0 1px; color: #333; }
.pane h3 { font-size: 14px; line-height: 18px; flex: 1; }
.pane header .arr { border-width: 7px; border-bottom: 0; }
.pane header button { width: 28px; margin-right: -8px; }
.listbox { flex: 1; margin: 8px 2px 0 8px; border: 1px solid #7f8690; background: #fff; display: flex; min-height: 0; color: #000; }
.items { flex: 1; }
.items li { height: 23px; display: flex; align-items: center; justify-content: space-between; padding: 0 3px 0 10px; }
.items .cur { border: 2px solid #3399f3; margin: 0 1px; padding: 0 1px 0 7px; }
.cur button { width: 17px; height: 17px; border: 1px solid #2e5a7d; background: linear-gradient(#e3f3fb, #7dbbe0); }
.caret.big-c { border-width: 5px; border-top-color: #000; border-bottom: 0; }
.more-styles { margin-top: 161px; }
.items b { font: bold 13px "Open Sans", sans-serif; color: #000080; }
.items b.u { font-size: 11px; line-height: 10px; border-bottom: 2px solid #000080; }
.lscroll { width: 20px; background: #f0f0f0; display: flex; flex-direction: column; align-items: center; justify-content: space-between; padding: 9px 0; }
.lscroll .arr { border-width: 4px; }
.lscroll .up { border-bottom-color: #888; border-top: 0; }
.lscroll .down { border-top-color: #888; border-bottom: 0; }
.check { display: flex; align-items: center; gap: 5px; height: 24px; margin-left: 7px; white-space: nowrap; overflow: hidden; }
.listbox + .check { margin-top: 3px; }
.check input { appearance: none; flex: none; width: 16px; height: 16px; margin: 0; border: 1px solid #8a8f96; background: linear-gradient(135deg, #cfd3d8, #fff); box-shadow: inset 0 0 0 2px #f2f3f5; }
.actions { display: flex; align-items: center; margin: 12px 2px 0 8px; gap: 14px; }
.actions button { width: 26px; height: 26px; border: 1px solid #80858d; border-radius: 2px; background: linear-gradient(#fff, #dfe2e6); }
.actions a { margin-left: auto; color: #0563d1; text-decoration: none; }

/* context menu */
.menu { position: absolute; left: 677px; top: 82px; width: 508px; padding: 1px; background: #fff; border: 1px solid #a5a9b0; box-shadow: 3px 3px 4px rgba(80,70,110,.4); font-size: 14px; }
.menu button { position: relative; width: 100%; height: 27px; justify-content: flex-start; padding-left: 39px; white-space: pre; }
.menu button.hot { padding-left: 38px; background: #ffecbb; border: 1px solid #f0c84e; }
.menu svg { position: absolute; left: 6px; top: 5px; }
.menu hr { height: 1px; margin: 1px 0 0 39px; border: 0; background: #e0e0e4; }

/* status bar */
.status { display: flex; align-items: center; border: 1px solid #8b9098; border-top: 3px solid #8b929b; background: linear-gradient(#e8eaed, #c9cdd2 60%, #b9bec5); white-space: nowrap; }
.status button { height: 23px; flex: none; }
.pg { width: 91px; } .ln { width: 67px; } .wd { width: 86px; } .sp { width: 34px; } .lang { width: 147px; } .mc { width: 38px; }
.ssep { width: 2px; height: 23px; border-left: 1px solid #a4a9b0; background: #f2f3f5; }
.view { width: 22px; }
.view.on { border: 1px solid #c29b36; border-radius: 2px; background: linear-gradient(#fbe08c, #ffd15a); margin-left: 3px; }
.zoom { width: 55px; }
.round { width: 22px; }
.slider { appearance: none; width: 122px; height: 20px; margin: 0; background: linear-gradient(#80868e, #80868e) center / 100% 1px no-repeat; }
.slider::-webkit-slider-thumb { appearance: none; width: 11px; height: 16px; border: 1px solid #666; border-radius: 1px 1px 5px 5px; background: #f6f7f8; }
.grip { margin: 8px 2px 0 7px; flex: none; }
```
